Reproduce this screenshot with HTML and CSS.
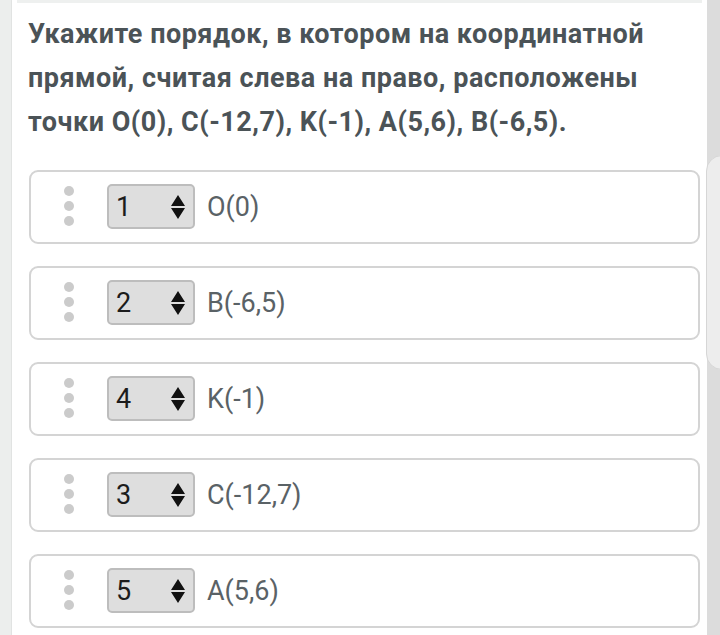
FILE: index.html
```html
<!DOCTYPE html>
<html lang="ru">
<head>
<meta charset="utf-8">
<link rel="stylesheet" href="styles.css">
</head>
<body>
<div class="page">
  <div class="gutter"></div>
  <main class="panel">
    <div class="strip"></div>
    <h1 class="question">Укажите порядок, в котором на координатной прямой, считая слева на право, расположены точки O(0), C(-12,7), K(-1), A(5,6), B(-6,5).</h1>
    <div class="list">
      <div class="card">
        <div class="handle"><span></span><span></span><span></span></div>
        <div class="select"><span class="val">1</span><svg class="arrows" viewBox="0 0 14 24" width="14" height="24"><path d="M7 0 L14 11 L0 11 Z M0 13 L14 13 L7 24 Z" fill="#111"/></svg></div>
        <div class="label">O(0)</div>
      </div>
      <div class="card">
        <div class="handle"><span></span><span></span><span></span></div>
        <div class="select"><span class="val">2</span><svg class="arrows" viewBox="0 0 14 24" width="14" height="24"><path d="M7 0 L14 11 L0 11 Z M0 13 L14 13 L7 24 Z" fill="#111"/></svg></div>
        <div class="label">B(-6,5)</div>
      </div>
      <div class="card">
        <div class="handle"><span></span><span></span><span></span></div>
        <div class="select"><span class="val">4</span><svg class="arrows" viewBox="0 0 14 24" width="14" height="24"><path d="M7 0 L14 11 L0 11 Z M0 13 L14 13 L7 24 Z" fill="#111"/></svg></div>
        <div class="label">K(-1)</div>
      </div>
      <div class="card">
        <div class="handle"><span></span><span></span><span></span></div>
        <div class="select"><span class="val">3</span><svg class="arrows" viewBox="0 0 14 24" width="14" height="24"><path d="M7 0 L14 11 L0 11 Z M0 13 L14 13 L7 24 Z" fill="#111"/></svg></div>
        <div class="label">C(-12,7)</div>
      </div>
      <div class="card">
        <div class="handle"><span></span><span></span><span></span></div>
        <div class="select"><span class="val">5</span><svg class="arrows" viewBox="0 0 14 24" width="14" height="24"><path d="M7 0 L14 11 L0 11 Z M0 13 L14 13 L7 24 Z" fill="#111"/></svg></div>
        <div class="label">A(5,6)</div>
      </div>
    </div>
  </main>
  <aside class="side">
    <div class="tab"></div>
  </aside>
</div>
</body>
</html>
```
FILE: styles.css
```css
html, body {
  margin: 0;
  padding: 0;
}
body {
  background: #eceeed;
  font-family: Roboto, "Liberation Sans", sans-serif;
  width: 720px;
  height: 635px;
  overflow: hidden;
}
.page {
  display: flex;
  height: 635px;
}
.gutter {
  width: 11px;
  flex: none;
  background: #eceeed;
  border-right: 1px solid #e2e4e3;
}
.panel {
  width: 695px;
  flex: none;
  background: #ffffff;
  box-shadow: 1px 0 2px rgba(0,0,0,0.06);
}
.strip {
  height: 3px;
  margin: 0 5px;
  background: #eef0ef;
}
.question {
  margin: 9px 0 0 16px;
  font-size: 27px;
  font-weight: 700;
  line-height: 44px;
  color: #4b5357;
  width: 640px;
  letter-spacing: 0.5px;
  height: 132px;
}
.list {
  display: flex;
  flex-direction: column;
  gap: 22px;
  margin: 26px 7px 0 17px;
}
.card {
  height: 74px;
  box-sizing: border-box;
  border: 2px solid #d4d4d4;
  border-radius: 9px;
  display: flex;
  align-items: center;
  padding-left: 33px;
}
.handle {
  display: flex;
  flex-direction: column;
  gap: 5px;
  width: 10px;
  margin-top: -2px;
}
.handle span {
  width: 10px;
  height: 10px;
  border-radius: 50%;
  background: #cbcbcb;
}
.select {
  margin-left: 33px;
  width: 88px;
  height: 45px;
  box-sizing: border-box;
  border: 2px solid #bdbdbd;
  border-radius: 5px;
  background: #dedede;
  display: flex;
  align-items: center;
  justify-content: space-between;
  padding: 0 8px 0 7px;
  margin-top: -1px;
}
.val {
  font-size: 27px;
  color: #1c1c1c;
}
.arrows {
  display: block;
}
.label {
  margin-left: 12px;
  font-size: 27px;
  color: #5a6266;
}
.side {
  flex: 1;
  background: #dcdcdc;
  position: relative;
}
.tab {
  position: absolute;
  left: -1px;
  top: 155px;
  width: 30px;
  height: 213px;
  background: #ededed;
  border: 1px solid #d6d6d6;
  border-radius: 16px 0 0 16px;
}
```
